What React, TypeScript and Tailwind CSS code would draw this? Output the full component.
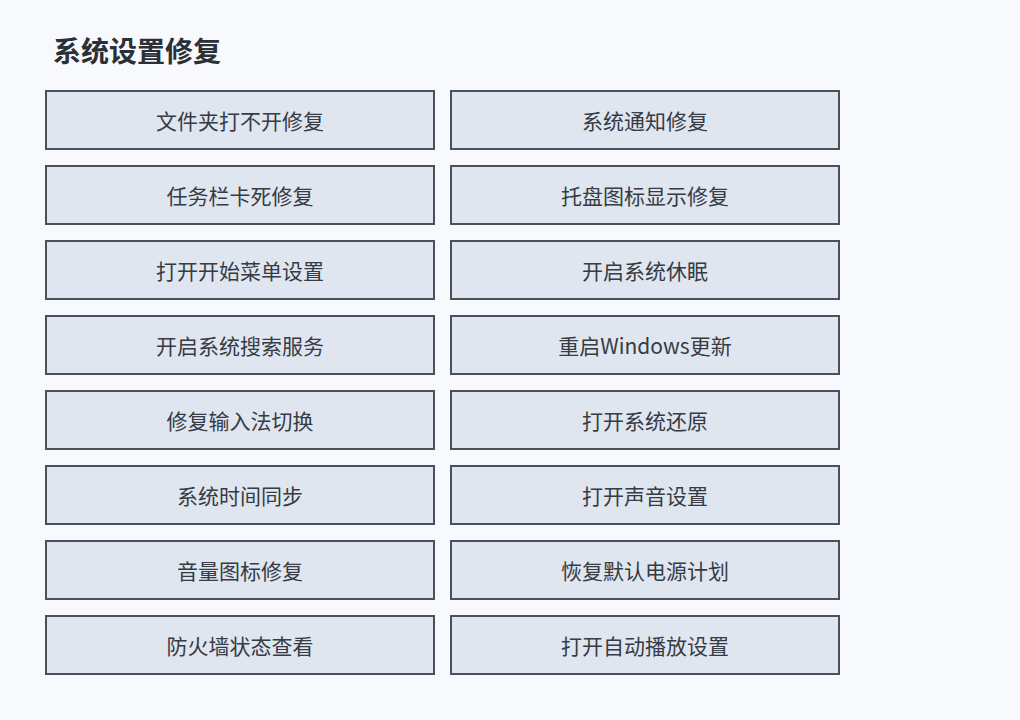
import React from 'react';

const items: string[] = [
  '文件夹打不开修复',
  '系统通知修复',
  '任务栏卡死修复',
  '托盘图标显示修复',
  '打开开始菜单设置',
  '开启系统休眠',
  '开启系统搜索服务',
  '重启Windows更新',
  '修复输入法切换',
  '打开系统还原',
  '系统时间同步',
  '打开声音设置',
  '音量图标修复',
  '恢复默认电源计划',
  '防火墙状态查看',
  '打开自动播放设置',
];

export default function App() {
  return (
    <div
      className="min-h-screen w-full bg-[#f7f9fc] pl-[45px] pt-[32px]"
      style={{ fontFamily: '"Noto Sans CJK SC", "Noto Sans", sans-serif' }}
    >
      {/* Header */}
      <h1 className="pl-[8px] text-[28px] font-bold leading-[36px] text-[#2b2f36]">系统设置修复</h1>

      <div className="mt-[22px] grid w-max grid-cols-[390px_390px] gap-[15px]">
        {items.map(label => (
          <button
            key={label}
            className="flex h-[60px] items-center justify-center border-2 border-[#4a515c] bg-[#dfe6f0] pt-[1px] text-[21px] text-[#363b44]"
          >
            {label}
          </button>
        ))}
      </div>
    </div>
  );
}
